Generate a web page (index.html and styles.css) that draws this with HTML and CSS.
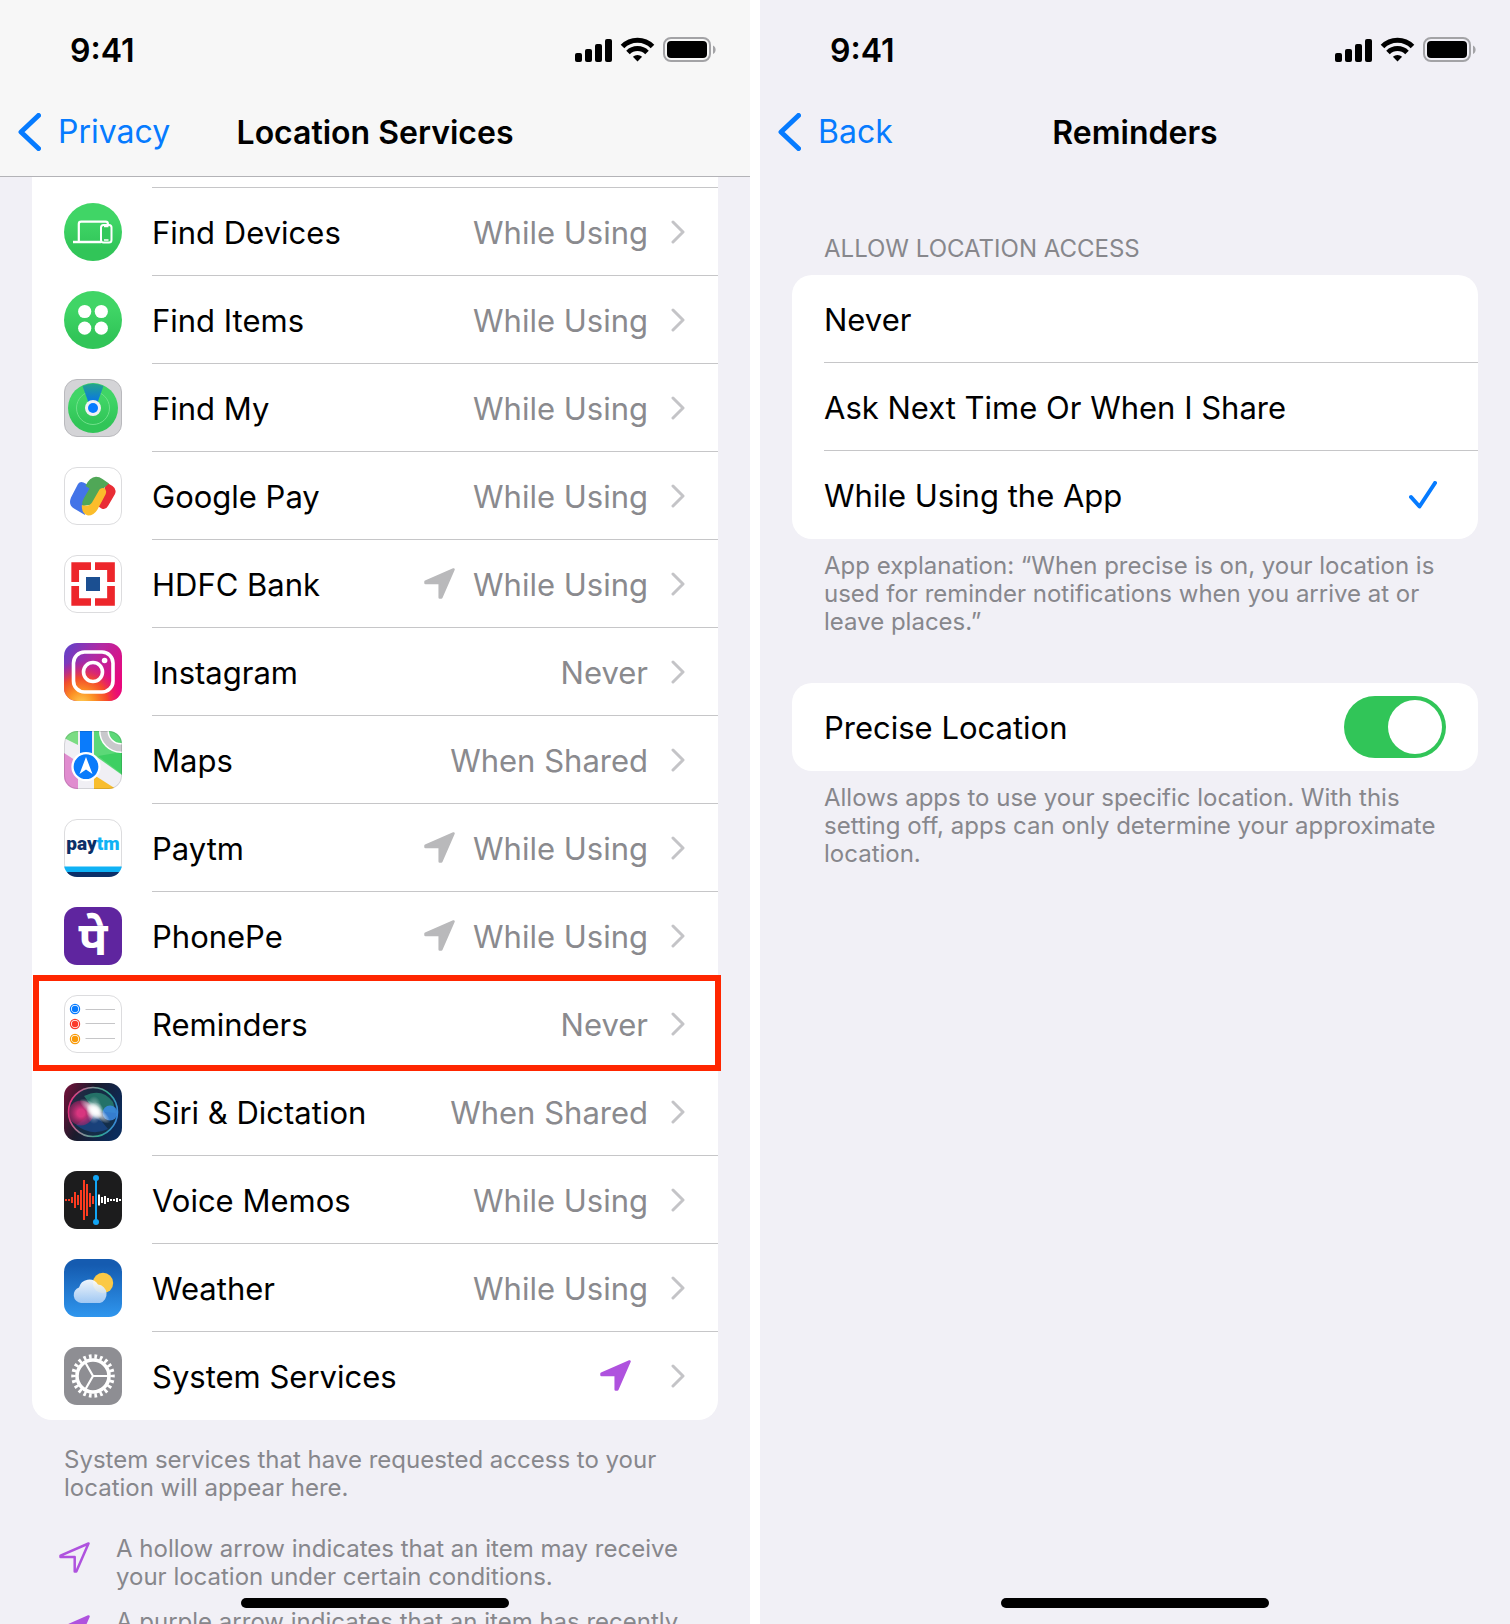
FILE: index.html
```html
<!DOCTYPE html>
<html lang="en">
<head>
  <meta charset="UTF-8" />
  <meta name="viewport" content="width=device-width, initial-scale=1" />
  <title>Location Services</title>
  <link rel="stylesheet" href="styles.css">
</head>
<body>

  <!-- Shared icons -->
  <svg class="sprite" aria-hidden="true">
    <symbol id="chevron" viewBox="0 0 14 24"><path d="M2 2l10 10L2 22" fill="none" stroke="currentColor" stroke-width="3" stroke-linecap="round" stroke-linejoin="round"/></symbol>
    <symbol id="back" viewBox="0 0 23 38"><path d="M20.500 2.500L3 19l17.500 16.500" fill="none" stroke="currentColor" stroke-width="5" stroke-linecap="round" stroke-linejoin="round"/></symbol>
    <symbol id="arrow" viewBox="0 0 31 31"><path d="M29.500 1.500L1.500 13.700V15h14.200v14.500h1.600z" fill="currentColor" stroke="currentColor" stroke-width="2.500" stroke-linejoin="round"/></symbol>
    <symbol id="arrow-hollow" viewBox="0 0 31 31"><path d="M29.500 1.500L1.500 13.700V15h14.200v14.500h1.600z" fill="none" stroke="currentColor" stroke-width="2.500" stroke-linejoin="round"/></symbol>
    <symbol id="status" viewBox="0 0 142 26">
      <rect x="0" y="16" width="7" height="9" rx="2"/>
      <rect x="10" y="12" width="7" height="13" rx="2"/>
      <rect x="20" y="7" width="7" height="18" rx="2"/>
      <rect x="30" y="2" width="7" height="23" rx="2"/>
      <g fill="none" stroke="#000" stroke-width="5">
        <path d="M47.500 9.500a21 21 0 0 1 30 0"/>
        <path d="M53 15.500a13.500 13.500 0 0 1 19 0"/>
      </g>
      <path d="M62.500 24.500l-4.600-4.700a6.700 6.700 0 0 1 9.200 0z"/>
      <rect x="89" y="1" width="46" height="23" rx="7" fill="none" stroke="#a3a3a6" stroke-width="2"/>
      <rect x="92" y="4" width="40" height="17" rx="4"/>
      <path d="M138 8.500c3.500 1.500 3.500 7 0 8.500z" fill="#a3a3a6"/>
    </symbol>
  </svg>

  <div class="screens">

    <!-- LOCATION SERVICES -->
    <section class="screen">
      <header class="header header-scrolled">
        <div class="statusbar">
          <span class="time">9:41</span>
          <svg class="status-icons" aria-label="Signal, Wi-Fi, battery"><use href="#status"/></svg>
        </div>
        <nav class="navbar">
          <a class="back" href="#"><svg><use href="#back"/></svg>Privacy</a>
          <h1>Location Services</h1>
        </nav>
      </header>

      <div class="card card-scrolled">
        <a class="row" href="#">
          <svg class="app" viewBox="0 0 58 58">
            <circle cx="29" cy="29" r="29" fill="url(#green)"/>
            <path d="M14.800 38.500V21q0-2.300 2.300-2.300h24.500q2.300 0 2.300 2.300" fill="none" stroke="#fff" stroke-width="2.200"/>
            <path d="M9 39h28" stroke="#fff" stroke-width="2.500"/>
            <rect x="37" y="22" width="10.500" height="17.500" rx="2.500" fill="#35c85b" stroke="#fff" stroke-width="2"/>
            <path d="M40 23.500h4.500M40 37h4.500" stroke="#fff" stroke-width="1.500"/>
          </svg>
          <span class="row-body"><span class="name">Find Devices</span><span class="value">While Using</span><svg class="chevron"><use href="#chevron"/></svg></span>
        </a>
        <a class="row" href="#">
          <svg class="app" viewBox="0 0 58 58">
            <circle cx="29" cy="29" r="29" fill="url(#green)"/>
            <g fill="#fff"><circle cx="20.700" cy="20.500" r="6.600"/><circle cx="37.300" cy="20.500" r="6.600"/><circle cx="20.700" cy="37.200" r="6.600"/><circle cx="37.300" cy="37.200" r="6.600"/></g>
          </svg>
          <span class="row-body"><span class="name">Find Items</span><span class="value">While Using</span><svg class="chevron"><use href="#chevron"/></svg></span>
        </a>
        <a class="row" href="#">
          <svg class="app" viewBox="0 0 58 58">
            <defs>
              <linearGradient id="green" x1="0" y1="0" x2="0" y2="1"><stop offset=".3" stop-color="#40d566"/><stop offset=".8" stop-color="#31c558"/></linearGradient>
              <linearGradient id="beam" x1="0" y1="0" x2="0" y2="1"><stop offset="0" stop-color="#25a48c"/><stop offset=".7" stop-color="#0a78e0"/></linearGradient>
            </defs>
            <rect x=".5" y=".5" width="57" height="57" rx="12.500" fill="#d4d4d7" stroke="#b9b9bd"/>
            <circle cx="29" cy="29" r="25" fill="url(#green)"/>
            <circle cx="29" cy="29" r="16.500" fill="none" stroke="#6fe08a" stroke-width="1"/>
            <path d="M18.500 7q10.500-5 21 0L31.500 29h-5z" fill="url(#beam)"/>
            <circle cx="29" cy="29" r="8" fill="#f1f1f4"/>
            <circle cx="29" cy="29" r="5" fill="#067bff"/>
          </svg>
          <span class="row-body"><span class="name">Find My</span><span class="value">While Using</span><svg class="chevron"><use href="#chevron"/></svg></span>
        </a>
        <a class="row" href="#">
          <svg class="app" viewBox="0 0 58 58">
            <rect x=".5" y=".5" width="57" height="57" rx="12.500" fill="#fff" stroke="#dcdcde"/>
            <path d="M42.500 15.500l6 3.500q4.500 3 2.500 8l-7 12q-2.500 4.500-6.500 2.500l-3-2z" fill="#e92d35"/>
            <path d="M14 17q2-3 5.500-1.500L28 20l-8 16 1 12-11-6.500Q4 38 7 30.500z" fill="#4374e8"/>
            <path d="M21.500 19q4-9 10.500-9.200 3.500 0 6.500 2.200l6.500 4.500-4.500 4-12 17-9.500 1.500q-2-2.500 1-8l5.500-9.500z" fill="#50a757"/>
            <path d="M35.500 22.500q1.500-2 4-1.500 4 1.500 2 6.500l-8 15q-3.500 6-9.500 6-6.500-1.500-6.200-10.500 6.700 2.500 10.200-2.500z" fill="#fbbd2b"/>
          </svg>
          <span class="row-body"><span class="name">Google Pay</span><span class="value">While Using</span><svg class="chevron"><use href="#chevron"/></svg></span>
        </a>
        <a class="row" href="#">
          <svg class="app" viewBox="0 0 58 58">
            <rect x=".5" y=".5" width="57" height="57" rx="12.500" fill="#fff" stroke="#dcdcde"/>
            <g fill="none" stroke="#ed262b" stroke-width="7.700">
              <path d="M11.200 27V11.200H27M31 11.200h16V27M47 31v16H31M27 47H11.200V31"/>
            </g>
            <rect x="22" y="22" width="14" height="14" fill="#1b4f91"/>
          </svg>
          <span class="row-body"><span class="name">HDFC Bank</span><svg class="arrow"><use href="#arrow"/></svg><span class="value">While Using</span><svg class="chevron"><use href="#chevron"/></svg></span>
        </a>
        <a class="row" href="#">
          <svg class="app" viewBox="0 0 58 58">
            <defs>
              <linearGradient id="ig" x1="0" y1="0" x2="1" y2=".6"><stop offset="0" stop-color="#5a43cc"/><stop offset=".5" stop-color="#b32aa3"/><stop offset="1" stop-color="#e9077c"/></linearGradient>
              <radialGradient id="ig-warm" cx=".3" cy="1.050" r=".75"><stop offset="0" stop-color="#ffcf55"/><stop offset=".3" stop-color="#fc9325"/><stop offset=".6" stop-color="#f9501f" stop-opacity=".9"/><stop offset="1" stop-color="#e9077c" stop-opacity="0"/></radialGradient>
            </defs>
            <rect width="58" height="58" rx="13" fill="url(#ig)"/>
            <rect width="58" height="58" rx="13" fill="url(#ig-warm)"/>
            <g fill="none" stroke="#fff" stroke-width="3.600"><rect x="9.500" y="9" width="39.500" height="40" rx="11"/><circle cx="29" cy="29" r="9.500"/></g>
            <circle cx="40.600" cy="17.500" r="2.800" fill="#fff"/>
          </svg>
          <span class="row-body"><span class="name">Instagram</span><span class="value">Never</span><svg class="chevron"><use href="#chevron"/></svg></span>
        </a>
        <a class="row" href="#">
          <svg class="app" viewBox="0 0 58 58">
            <clipPath id="tile"><rect width="58" height="58" rx="13"/></clipPath>
            <g clip-path="url(#tile)">
              <rect width="58" height="58" fill="#f0eff4"/>
              <path d="M0 0h14v14L0 7z" fill="#7bdc83"/>
              <path d="M30 0h28v44L30 24z" fill="#5cd878"/>
              <path d="M34 25l24-4v22z" fill="#3dcf62"/>
              <circle cx="57" cy="0" r="17" fill="none" stroke="#fff" stroke-width="10"/>
              <circle cx="57" cy="0" r="17" fill="none" stroke="#c9c9cc" stroke-width="7"/>
              <path d="M0 22l14 9v27H0z" fill="#e08ccf"/>
              <path d="M30 44l22 14H30z" fill="#f8bd2d"/>
              <path d="M16 0h12v28H16z" fill="#0a7bfb"/>
              <circle cx="22" cy="35.700" r="13.500" fill="#0a7bfb" stroke="#fff" stroke-width="2.300"/>
              <path d="M22 26l6.500 17L22 38.500 15.500 43z" fill="#fff"/>
            </g>
            <rect x=".5" y=".5" width="57" height="57" rx="12.500" fill="none" stroke="#000" stroke-opacity=".12"/>
          </svg>
          <span class="row-body"><span class="name">Maps</span><span class="value">When Shared</span><svg class="chevron"><use href="#chevron"/></svg></span>
        </a>
        <a class="row" href="#">
          <svg class="app" viewBox="0 0 58 58">
            <rect x=".5" y=".5" width="57" height="57" rx="12.500" fill="#fff" stroke="#dcdcde"/>
            <g clip-path="url(#tile)"><path d="M0 47.500h58V53H0z" fill="#0fb2f5"/><path d="M0 53h58v5H0z" fill="#0b2f68"/></g>
            <text class="paytm" x="29" y="31" text-anchor="middle"><tspan fill="#0b2f68">pay</tspan><tspan fill="#0fb2f5">tm</tspan></text>
          </svg>
          <span class="row-body"><span class="name">Paytm</span><svg class="arrow"><use href="#arrow"/></svg><span class="value">While Using</span><svg class="chevron"><use href="#chevron"/></svg></span>
        </a>
        <a class="row" href="#">
          <svg class="app" viewBox="0 0 58 58">
            <rect width="58" height="58" rx="13" fill="#5f259f"/>
            <text class="phonepe" x="29" y="48" text-anchor="middle">पे</text>
          </svg>
          <span class="row-body"><span class="name">PhonePe</span><svg class="arrow"><use href="#arrow"/></svg><span class="value">While Using</span><svg class="chevron"><use href="#chevron"/></svg></span>
        </a>
        <a class="row row-marked" href="#">
          <svg class="app" viewBox="0 0 58 58">
            <rect x=".5" y=".5" width="57" height="57" rx="12.500" fill="#fff" stroke="#dcdcde"/>
            <path d="M21.500 14.500H51M21.500 28.500H51M21.500 43.500H51" stroke="#c6c6c8"/>
            <g fill="none" stroke-width="1.200"><circle cx="11" cy="14" r="4.600" stroke="#067bff"/><circle cx="11" cy="29" r="4.600" stroke="#fb3b2c"/><circle cx="11" cy="44" r="4.600" stroke="#f99a08"/></g>
            <circle cx="11" cy="14" r="3.200" fill="#067bff"/><circle cx="11" cy="29" r="3.200" fill="#fb3b2c"/><circle cx="11" cy="44" r="3.200" fill="#f99a08"/>
          </svg>
          <span class="row-body"><span class="name">Reminders</span><span class="value">Never</span><svg class="chevron"><use href="#chevron"/></svg></span>
        </a>
        <a class="row" href="#">
          <svg class="app" viewBox="0 0 58 58">
            <defs>
              <linearGradient id="siri" x1="0" y1=".2" x2="1" y2=".6"><stop offset="0" stop-color="#6a1238"/><stop offset=".4" stop-color="#1b1b2c"/><stop offset="1" stop-color="#0b2c5c"/></linearGradient>
              <linearGradient id="siri-ring" x1="0" y1=".5" x2="1" y2=".7"><stop offset="0" stop-color="#e2347f"/><stop offset=".35" stop-color="#8a8f98"/><stop offset=".7" stop-color="#2fa98c"/><stop offset="1" stop-color="#3a86e0"/></linearGradient>
              <radialGradient id="siri-pink"><stop offset=".3" stop-color="#d8357f"/><stop offset="1" stop-color="#b81f66" stop-opacity=".5"/></radialGradient>
              <radialGradient id="flare"><stop offset="0" stop-color="#fff"/><stop offset=".4" stop-color="#fff" stop-opacity=".7"/><stop offset="1" stop-color="#fff" stop-opacity="0"/></radialGradient>
            </defs>
            <rect width="58" height="58" rx="13" fill="url(#siri)"/>
            <circle cx="29" cy="29" r="24.500" fill="#16324a" fill-opacity=".7" stroke="url(#siri-ring)" stroke-width="1.600"/>
            <path d="M20 13q18-9 29 6l3 11-21-2z" fill="#2a8a74" fill-opacity=".75"/>
            <path d="M12 42q16 12 32 4l-14-17z" fill="#1c4f9c" fill-opacity=".6"/>
            <circle cx="17" cy="30" r="12.500" fill="url(#siri-pink)"/>
            <circle cx="46" cy="30" r="7.500" fill="#3c8be6" fill-opacity=".85"/>
            <ellipse cx="31" cy="28" rx="19" ry="6" fill="url(#flare)" transform="rotate(38 31 28)"/>
            <ellipse cx="30" cy="27" rx="8" ry="14" fill="url(#flare)" fill-opacity=".6"/>
            <circle cx="31" cy="28" r="9" fill="url(#flare)"/>
          </svg>
          <span class="row-body"><span class="name">Siri &amp; Dictation</span><span class="value">When Shared</span><svg class="chevron"><use href="#chevron"/></svg></span>
        </a>
        <a class="row" href="#">
          <svg class="app" viewBox="0 0 58 58">
            <rect width="58" height="58" rx="13" fill="#1c1c1d"/>
            <g fill="none" stroke-width="2">
              <path d="M2 28v2M5 28v2M8 26v6M11 21v16M14 24v10M17 19v20M20 9v40M23 13v32M26 22v14M29 25v8" stroke="#fb3b20"/>
              <path d="M35 23.500v11M38 26v6M41 25v8M44 27v4M47 28v2M50 28v2M53 27v4M56 28v2" stroke="#fff"/>
              <path d="M32 7v44" stroke="#12a5f4"/>
            </g>
            <circle cx="32" cy="7" r="3" fill="#12a5f4"/><circle cx="32" cy="51" r="3" fill="#12a5f4"/>
          </svg>
          <span class="row-body"><span class="name">Voice Memos</span><span class="value">While Using</span><svg class="chevron"><use href="#chevron"/></svg></span>
        </a>
        <a class="row" href="#">
          <svg class="app" viewBox="0 0 58 58">
            <defs>
              <linearGradient id="sky" x1="0" y1="0" x2="0" y2="1"><stop offset=".1" stop-color="#155bb0"/><stop offset="1" stop-color="#2f96ee"/></linearGradient>
              <linearGradient id="cloud" x1="0" y1="0" x2="0" y2="1"><stop offset="0" stop-color="#fff"/><stop offset="1" stop-color="#a9cdf5"/></linearGradient>
            </defs>
            <rect width="58" height="58" rx="13" fill="url(#sky)"/>
            <circle cx="39" cy="24" r="10.200" fill="#fbc947"/>
            <path d="M17 44a8 8 0 0 1-2-15.500 10.500 10.500 0 0 1 19-3A9.500 9.500 0 0 1 36 44z" fill="url(#cloud)" fill-opacity=".93"/>
          </svg>
          <span class="row-body"><span class="name">Weather</span><span class="value">While Using</span><svg class="chevron"><use href="#chevron"/></svg></span>
        </a>
        <a class="row" href="#">
          <svg class="app" viewBox="0 0 58 58">
            <rect width="58" height="58" rx="13" fill="#8e8e93"/>
            <g fill="none" stroke="#fff">
              <circle cx="29" cy="29" r="16" stroke-width="3.600"/>
              <circle cx="29" cy="29" r="19.500" stroke-width="4.500" pathLength="220" stroke-dasharray="4.800 5.200" stroke-dashoffset="2.400"/>
              <path d="M29 29h16M29 29l-8-14M29 29l-8 14" stroke-width="2.200"/>
            </g>
          </svg>
          <span class="row-body"><span class="name">System Services</span><svg class="arrow purple"><use href="#arrow"/></svg><svg class="chevron"><use href="#chevron"/></svg></span>
        </a>
      </div>

      <p class="note note-spaced">System services that have requested access to your location will appear here.</p>
      <ul class="legend">
        <li><svg class="arrow purple"><use href="#arrow-hollow"/></svg><span>A hollow arrow indicates that an item may receive your location under certain conditions.</span></li>
        <li><svg class="arrow purple"><use href="#arrow"/></svg><span>A purple arrow indicates that an item has recently used your location.</span></li>
      </ul>
      <div class="home"></div>
    </section>

    <!-- REMINDERS -->
    <section class="screen">
      <header class="header">
        <div class="statusbar">
          <span class="time">9:41</span>
          <svg class="status-icons" aria-label="Signal, Wi-Fi, battery"><use href="#status"/></svg>
        </div>
        <nav class="navbar">
          <a class="back" href="#"><svg><use href="#back"/></svg>Back</a>
          <h1>Reminders</h1>
        </nav>
      </header>

      <h2 id="access">ALLOW LOCATION ACCESS</h2>
      <div class="card" role="radiogroup" aria-labelledby="access">
        <label class="row"><span class="row-body"><span class="name">Never</span><input class="check" type="radio" name="access"></span></label>
        <label class="row"><span class="row-body"><span class="name">Ask Next Time Or When I Share</span><input class="check" type="radio" name="access"></span></label>
        <label class="row"><span class="row-body"><span class="name">While Using the App</span><input class="check" type="radio" name="access" checked><svg class="tick" viewBox="0 0 28 28"><path d="M2 16l8.500 9.500L26 2" fill="none" stroke="currentColor" stroke-width="4" stroke-linecap="round" stroke-linejoin="round"/></svg></span></label>
      </div>
      <p class="note">App explanation: “When precise is on, your location is used for reminder notifications when you arrive at or leave places.”</p>

      <div class="card card-spaced">
        <label class="row"><span class="row-body"><span class="name">Precise Location</span><input class="switch" type="checkbox" checked></span></label>
      </div>
      <p class="note">Allows apps to use your specific location. With this setting off, apps can only determine your approximate location.</p>
      <div class="home"></div>
    </section>

  </div>

</body>
</html>
```
FILE: styles.css
```css
* {
  box-sizing: border-box;
}

body {
  margin: 0;
  background-color: #fff;
  color: #000;
  font-family: Inter, "Liberation Sans", sans-serif;
  font-size: 31px;
  line-height: 40px;
}

a {
  color: inherit;
  text-decoration: none;
}

.sprite {
  position: absolute;
  width: 0;
  height: 0;
}

.screens {
  display: flex;
  gap: 10px;
}

.screen {
  position: relative;
  flex: 1;
  min-width: 0;
  height: 100vh;
  overflow: hidden;
  background-color: #f1f0f6;
}

/* Header */
.header {
  border-bottom: 1px solid transparent;
  font-size: 32px;
}

.header-scrolled {
  background-color: #f7f7f7;
  border-color: #b3b3b7;
}

.statusbar {
  display: flex;
  align-items: center;
  justify-content: space-between;
  height: 88px;
  padding: 12px 33px 0 70px;
  font-weight: 600;
}

.status-icons {
  width: 142px;
  height: 26px;
}

.navbar {
  display: grid;
  grid-template-columns: 1fr auto 1fr;
  align-items: center;
  height: 88px;
  padding: 0 18px;
}

.navbar h1 {
  margin: 0;
  font-size: 32px;
  font-weight: 600;
}

/* Text sits slightly below the middle of its bar */
.time,
.navbar h1,
.name,
.value {
  padding-top: 2px;
}

.back {
  display: flex;
  align-items: center;
  gap: 17px;
  color: #067bff;
}

.back svg {
  width: 23px;
  height: 38px;
}

/* Grouped lists */
.card {
  margin: 0 32px;
  background-color: #fff;
  border-radius: 20px;
}

.card-scrolled {
  border-radius: 0 0 20px 20px;
}

.card-scrolled::before {
  content: "";
  display: block;
  height: 10px;
  margin-left: 120px;
  border-bottom: 1px solid #c6c6c8;
}

.card-spaced {
  margin-top: 47px;
}

.row {
  position: relative;
  display: flex;
  align-items: center;
  height: 88px;
  padding-left: 32px;
}

.app {
  flex: none;
  width: 58px;
  height: 58px;
  margin-right: 30px;
}

.row-body {
  flex: 1;
  display: flex;
  align-items: center;
  height: 100%;
  padding-right: 32px;
  border-bottom: 1px solid #c6c6c8;
}

.row:last-child .row-body {
  border-bottom-color: transparent;
}

.row-marked::after {
  content: "";
  position: absolute;
  inset: -5px -3px -3px 1px;
  border: 6px solid #ff2600;
}

.name {
  flex: 1;
}

.value {
  margin-left: 18px;
  color: #8a8a8e;
}

.arrow {
  flex: none;
  width: 31px;
  height: 31px;
  color: #b9b9bb;
}

.arrow.purple {
  color: #af52de;
}

.row .arrow.purple {
  margin-right: 17px;
}

.chevron {
  width: 14px;
  height: 24px;
  margin: 0 1px 0 23px;
  color: #c4c4c7;
}

.paytm {
  font-family: Roboto, sans-serif;
  font-size: 19px;
  font-weight: 900;
}

.phonepe {
  font-family: "Noto Sans", sans-serif;
  font-size: 47px;
  font-weight: 700;
  fill: #fff;
}

/* Small text */
.screen h2,
.note,
.legend {
  color: #87878c;
  font-size: 24px;
  font-weight: 400;
  line-height: 28px;
}

.screen h2 {
  margin: 58px 64px 12px;
}

.note {
  margin: 13px 64px 0;
}

.note-spaced {
  margin-top: 26px;
}

.legend {
  list-style: none;
  margin: 33px 59px 0;
  padding: 0;
}

.legend li {
  display: flex;
  align-items: flex-start;
  gap: 26px;
  margin-bottom: 17px;
}

.legend .arrow {
  margin-top: 7px;
}

/* Controls */
.check {
  appearance: none;
  width: 0;
  height: 0;
  margin: 0;
}

.tick {
  display: none;
  width: 28px;
  height: 28px;
  margin-right: 9px;
  color: #067bff;
}

.check:checked + .tick {
  display: block;
}

.switch {
  appearance: none;
  display: flex;
  width: 102px;
  height: 62px;
  margin: 0;
  padding: 4px;
  border-radius: 31px;
  background-color: #e9e9ea;
}

.switch::before {
  content: "";
  width: 54px;
  height: 54px;
  border-radius: 50%;
  background-color: #fff;
}

.switch:checked {
  justify-content: flex-end;
  background-color: #31c558;
}

.home {
  position: absolute;
  left: 50%;
  bottom: 16px;
  width: 268px;
  height: 10px;
  margin-left: -134px;
  border-radius: 5px;
  background-color: #000;
}
```
